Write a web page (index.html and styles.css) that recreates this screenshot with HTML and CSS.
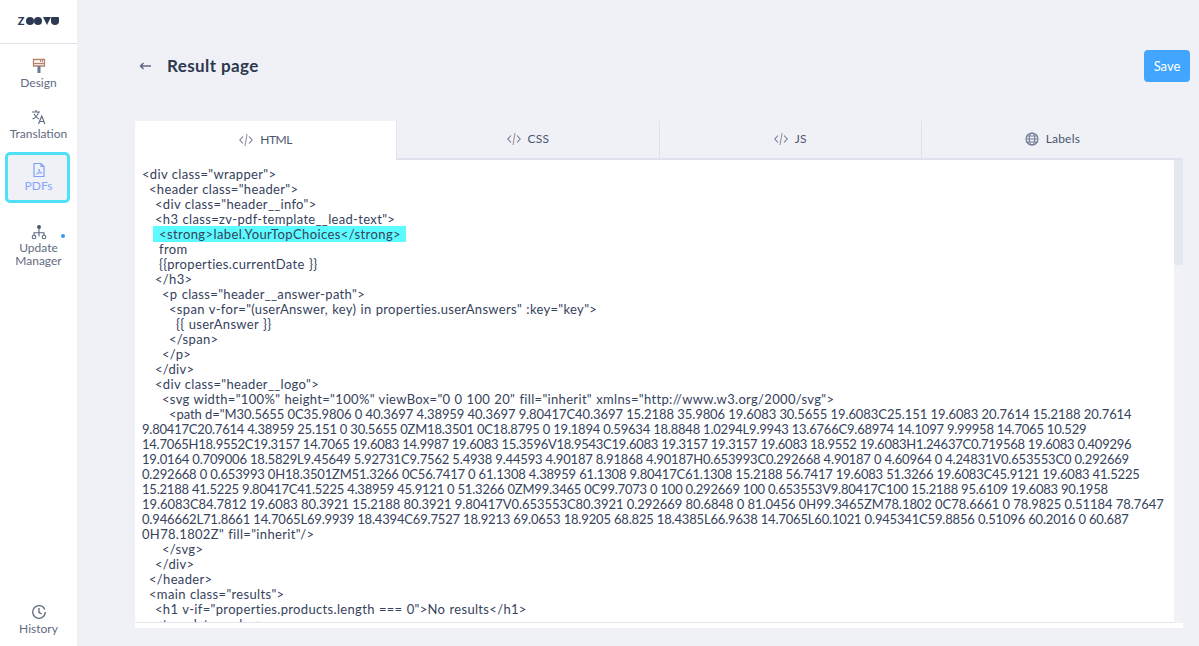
FILE: index.html
```html
<!DOCTYPE html>
<html lang="en">
<head>
<meta charset="utf-8">
<title>Result page</title>
<link rel="stylesheet" href="styles.css">
</head>
<body>
<aside class="sidebar">
  <div class="logo" aria-label="zoovu"><span class="logo-z">Z</span><i class="dot"></i><i class="dot"></i><i class="tri"></i><i class="cup"></i></div>
  <nav class="nav">
    <a class="nav-item"><svg class="nav-icon" viewBox="0 0 16 16"><path d="M2.500 1.500h11v6.500h-11zM2.500 5.500h11" fill="none" stroke="#b5826f" stroke-width="1.300"/><path d="M9.500 1.500v2.500M11.500 1.500v2.500" stroke="#b5826f"/><path d="M6.500 8h3v7h-3z" fill="#6a7690"/></svg><span>Design</span></a>
    <a class="nav-item"><svg class="nav-icon" viewBox="0 0 16 16"><path d="M1 3h8M5 1v2M7.500 3C7 6 4 9 1.500 10M3 5c1 2 3 4 5 5M7.500 15l3.200-8 3.200 8M8.700 12.500h4" fill="none" stroke="#5c6880" stroke-width="1.100"/></svg><span>Translation</span></a>
    <a class="nav-item nav-item-active"><svg class="nav-icon" viewBox="0 0 16 16"><path d="M3 1.500h7l3 3v10H3zM10 1.500v3h3" fill="none" stroke="#7f9ff5" stroke-width="1.200"/><path d="M5.500 12c2-1 3-3 2.500-5 0 2 1 3.500 3 4-2-.3-4 0-5.500 1z" fill="none" stroke="#7f9ff5" stroke-width=".9"/></svg><span>PDFs</span></a>
    <a class="nav-item nav-item-update"><svg class="nav-icon" viewBox="0 0 16 16"><circle cx="8" cy="3" r="2" fill="#4c5872"/><circle cx="3" cy="13" r="1.800" fill="none" stroke="#5c6880" stroke-width="1.100"/><circle cx="13" cy="13" r="1.800" fill="none" stroke="#5c6880" stroke-width="1.100"/><path d="M8 4.500v8M3 11.200V8.700h10v2.500" fill="none" stroke="#5c6880" stroke-width="1.100"/></svg><span>Update<br>Manager</span><i class="badge"></i></a>
  </nav>
  <a class="nav-item nav-item-history"><svg class="nav-icon" viewBox="0 0 16 16"><circle cx="8" cy="8" r="6.300" fill="none" stroke="#5c6880" stroke-width="1.300" stroke-dasharray="36 4"/><path d="M8 4v4.300l2.600 1.700" fill="none" stroke="#5c6880" stroke-width="1.300"/></svg><span>History</span></a>
</aside>
<main class="main">
  <header class="topbar">
    <div class="title-group">
      <svg class="back" viewBox="0 0 12 10"><path d="M12 5H1.500M4.500 2 1.500 5l3 3" fill="none" stroke="#5f6b82" stroke-width="1.500"/></svg>
      <h1 class="title">Result page</h1>
    </div>
    <button class="save">Save</button>
  </header>
  <section class="panel">
    <div class="tabs">
      <div class="tab tab-active"><svg class="tab-icon" viewBox="0 0 14 14"><path d="M4 3.500.8 7 4 10.500M10 3.500 13.200 7 10 10.500" fill="none" stroke="#6f7b96" stroke-width="1.100"/><path d="M8 1 6 13" stroke="#a08f94" stroke-width="1.100"/></svg>HTML</div>
      <div class="tab"><svg class="tab-icon" viewBox="0 0 14 14"><path d="M4 3.500.8 7 4 10.500M10 3.500 13.200 7 10 10.500" fill="none" stroke="#6f7b96" stroke-width="1.100"/><path d="M8 1 6 13" stroke="#a08f94" stroke-width="1.100"/></svg>CSS</div>
      <div class="tab"><svg class="tab-icon" viewBox="0 0 14 14"><path d="M4 3.500.8 7 4 10.500M10 3.500 13.200 7 10 10.500" fill="none" stroke="#6f7b96" stroke-width="1.100"/><path d="M8 1 6 13" stroke="#a08f94" stroke-width="1.100"/></svg>JS</div>
      <div class="tab"><svg class="tab-icon" viewBox="0 0 14 14"><circle cx="7" cy="7" r="6" fill="none" stroke="#6a7690" stroke-width="1.100"/><ellipse cx="7" cy="7" rx="2.800" ry="6" fill="none" stroke="#6a7690"/><path d="M1 7h12M2 4h10M2 10h10" stroke="#6a7690"/></svg>Labels</div>
    </div>
    <div class="editor-wrap">
      <div class="editor">
        <div class="code">
          <span class="ln">&lt;div class="wrapper"&gt;</span>
          <span class="ln i1">&lt;header class="header"&gt;</span>
          <span class="ln i2">&lt;div class="header__info"&gt;</span>
          <span class="ln i2">&lt;h3 class=zv-pdf-template__lead-text"&gt;</span>
          <span class="ln ln-hl"><mark class="hl">&lt;strong&gt;label.YourTopChoices&lt;/strong&gt;</mark></span>
          <span class="ln i3">from</span>
          <span class="ln i3">{{properties.currentDate }}</span>
          <span class="ln i2">&lt;/h3&gt;</span>
          <span class="ln i4">&lt;p class="header__answer-path"&gt;</span>
          <span class="ln i5">&lt;span v-for="(userAnswer, key) in properties.userAnswers" :key="key"&gt;</span>
          <span class="ln i6">{{ userAnswer }}</span>
          <span class="ln i5">&lt;/span&gt;</span>
          <span class="ln i4">&lt;/p&gt;</span>
          <span class="ln i2">&lt;/div&gt;</span>
          <span class="ln i2">&lt;div class="header__logo"&gt;</span>
          <span class="ln i4">&lt;svg width="100%" height="100%" viewBox="0 0 100 20" fill="inherit" xmlns="http://www.w3.org/2000/svg"&gt;</span>
          <span class="ln i5 ln-first">&lt;path d="M30.5655 0C35.9806 0 40.3697 4.38959 40.3697 9.80417C40.3697 15.2188 35.9806 19.6083 30.5655 19.6083C25.151 19.6083 20.7614 15.2188 20.7614</span>
          <span class="ln ln-mid">9.80417C20.7614 4.38959 25.151 0 30.5655 0ZM18.3501 0C18.8795 0 19.1894 0.59634 18.8848 1.0294L9.9943 13.6766C9.68974 14.1097 9.99958 14.7065 10.529</span>
          <span class="ln ln-tight">14.7065H18.9552C19.3157 14.7065 19.6083 14.9987 19.6083 15.3596V18.9543C19.6083 19.3157 19.3157 19.6083 18.9552 19.6083H1.24637C0.719568 19.6083 0.409296</span>
          <span class="ln ln-path">19.0164 0.709006 18.5829L9.45649 5.92731C9.7562 5.4938 9.44593 4.90187 8.91868 4.90187H0.653993C0.292668 4.90187 0 4.60964 0 4.24831V0.653553C0 0.292669</span>
          <span class="ln ln-path">0.292668 0 0.653993 0H18.3501ZM51.3266 0C56.7417 0 61.1308 4.38959 61.1308 9.80417C61.1308 15.2188 56.7417 19.6083 51.3266 19.6083C45.9121 19.6083 41.5225</span>
          <span class="ln ln-mid">15.2188 41.5225 9.80417C41.5225 4.38959 45.9121 0 51.3266 0ZM99.3465 0C99.7073 0 100 0.292669 100 0.653553V9.80417C100 15.2188 95.6109 19.6083 90.1958</span>
          <span class="ln ln-loose">19.6083C84.7812 19.6083 80.3921 15.2188 80.3921 9.80417V0.653553C80.3921 0.292669 80.6848 0 81.0456 0H99.3465ZM78.1802 0C78.6661 0 78.9825 0.51184 78.7647</span>
          <span class="ln ln-path">0.946662L71.8661 14.7065L69.9939 18.4394C69.7527 18.9213 69.0653 18.9205 68.825 18.4385L66.9638 14.7065L60.1021 0.945341C59.8856 0.51096 60.2016 0 60.687</span>
          <span class="ln">0H78.1802Z" fill="inherit"/&gt;</span>
          <span class="ln i4">&lt;/svg&gt;</span>
          <span class="ln i2">&lt;/div&gt;</span>
          <span class="ln i1">&lt;/header&gt;</span>
          <span class="ln i1">&lt;main class="results"&gt;</span>
          <span class="ln i2">&lt;h1 v-if="properties.products.length === 0"&gt;No results&lt;/h1&gt;</span>
          <span class="ln i2">&lt;template v-else&gt;</span>
        </div>
      </div>
      <div class="scrollbar"><div class="thumb"></div></div>
    </div>
  </section>
</main>
</body>
</html>
```

FILE: styles.css
```css
* { box-sizing: border-box; }
html, body { height: 100%; margin: 0; }
body {
  display: flex;
  height: 646px;
  overflow: hidden;
  background: #f0f1f6;
  font-family: Lato, "Liberation Sans", sans-serif;
  color: #36425c;
}
.sidebar {
  flex: 0 0 77px;
  display: flex;
  flex-direction: column;
  background: #fff;
}
.logo {
  height: 44px;
  border-bottom: 1px solid #dfe2ea;
  display: flex;
  align-items: center;
  justify-content: center;
  gap: 0.5px;
  padding-bottom: 2px;
}
.logo-z { font: 900 11px/8px Lato, sans-serif; color: #2b3a52; margin-right: 1px; }
.dot { width: 8px; height: 8px; border-radius: 50%; background: #2b3a52; }
.tri { width: 0; height: 0; border-left: 4px solid transparent; border-right: 4px solid transparent; border-top: 8px solid #2b3a52; }
.cup { width: 8px; height: 8px; border-radius: 1px 1px 4px 4px; background: #2b3a52; }
.nav { flex: 1; display: flex; flex-direction: column; align-items: center; }
.nav-item {
  position: relative;
  display: flex;
  flex-direction: column;
  align-items: center;
  font-size: 12px;
  line-height: 13px;
  color: #5f6b83;
  text-align: center;
  width: 65px;
}
.nav-item:nth-child(1) { margin-top: 14px; }
.nav-item:nth-child(2) { margin-top: 20px; }
.nav-item:nth-child(3) { margin-top: 12px; }
.nav-item-active {
  height: 51px;
  margin-left: -2px;
  padding: 10px 0 0 2px;
  border: 3px solid #4fe0f5;
  border-radius: 5px;
  background: #eff1f7;
  color: #86a5f7;
}
.nav-item-update { margin-top: 21px; }
.nav-icon { width: 16px; height: 16px; margin-bottom: 2px; }
.nav-item-active .nav-icon { margin-top: -3px; margin-bottom: 1px; }
.nav-item-update .nav-icon { margin-bottom: 1px; }
.nav-item-history { margin: 0 auto 11px; }
.badge { position: absolute; right: 6px; top: 10px; width: 4px; height: 4px; border-radius: 50%; background: #3b96f5; }
.main { flex: 1; min-width: 0; padding-right: 9px; }
.topbar {
  height: 121px;
  padding: 50px 0 0 62px;
  display: flex;
  justify-content: space-between;
  align-items: flex-start;
}
.title-group { display: flex; align-items: center; gap: 16px; height: 32px; }
.back { width: 12px; height: 10px; }
.title { margin: 0 0 2px; font-size: 17px; font-weight: 700; letter-spacing: 0.4px; color: #2d3850; }
.save {
  width: 46px;
  height: 32px;
  border: 0;
  border-radius: 4px;
  background: #42a6ff;
  color: #fff;
  font: 400 13px Lato, sans-serif;
}
.panel { margin-left: 58px; width: 1048px; }
.tabs { display: flex; height: 39px; border-bottom: 2px solid #dfe2ee; }
.tab {
  flex: 1;
  display: flex;
  align-items: center;
  justify-content: center;
  gap: 7px;
  padding-bottom: 2px;
  font-size: 12px;
  letter-spacing: 0.2px;
  color: #4a5670;
  border-right: 1px solid #dfe2ea;
}
.tab:last-child { border-right: 0; }
.tab-active { background: #fff; height: 39px; letter-spacing: -0.5px; border-right-color: #e3e5ee; }
.tab-icon { width: 14px; height: 14px; }
.editor-wrap {
  position: relative;
  height: 468px;
  background: #fff;
  padding-bottom: 5px;
}
.editor {
  height: 463px;
  overflow: hidden;
  padding: 7px 0 0 8px;
  border-bottom: 1px solid #e3e5ee;
  border-radius: 0 0 3px 3px;
}
.code {
  margin-left: -1px;
  font-size: 13px;
  line-height: 15px;
  letter-spacing: 0.33px;
  word-spacing: 0.5px;
  color: #36425c;
}
.ln { display: block; height: 15px; white-space: pre; }
.i1 { padding-left: 7px; }
.i2 { padding-left: 13px; }
.i3 { padding-left: 17px; }
.i4 { padding-left: 20px; }
.i5 { padding-left: 27px; }
.i6 { padding-left: 34px; }
.ln-hl { height: 16px; margin-top: -1px; padding-left: 11px; }
.hl { display: inline-block; height: 16px; padding: 1px 5px 0 6px; letter-spacing: 0.4px; background: #5cfbff; color: inherit; }
.ln-path { letter-spacing: -0.17px; word-spacing: 0; }
.ln-mid { letter-spacing: -0.21px; word-spacing: 0; }
.ln-tight { letter-spacing: -0.25px; word-spacing: 0; }
.ln-loose { letter-spacing: -0.05px; word-spacing: 0; }
.ln-first { letter-spacing: -0.07px; word-spacing: 0; }
.scrollbar { position: absolute; right: 0; top: 0; bottom: 5px; width: 9px; background: #f1f2f5; }
.thumb { height: 105px; background: #e3e7ef; border-radius: 2px; }
```
